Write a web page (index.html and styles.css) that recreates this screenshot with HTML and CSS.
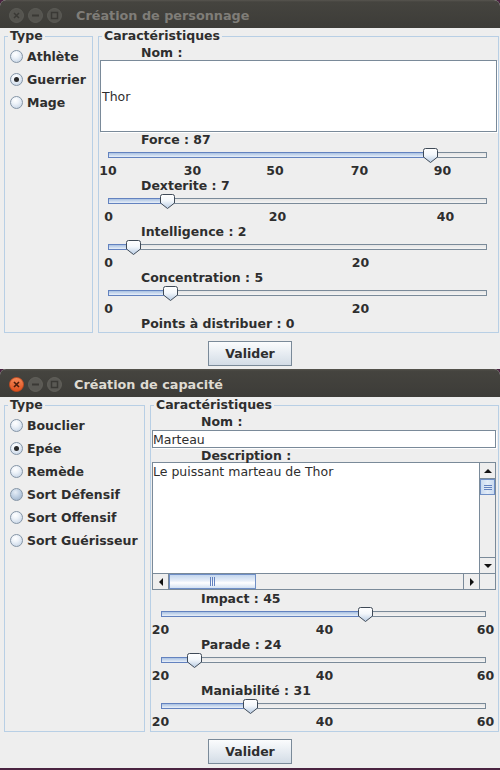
FILE: index.html
```html
<!DOCTYPE html>
<html lang="fr">
<head>
<meta charset="utf-8">
<title>Création de personnage</title>
<link rel="stylesheet" href="styles.css">
</head>
<body>
<svg class="defs" width="0" height="0" aria-hidden="true">
  <defs>
    <linearGradient id="thumbGrad" x1="0" y1="0" x2="0" y2="1">
      <stop offset="0" stop-color="#ffffff"/>
      <stop offset="0.45" stop-color="#f3f7fb"/>
      <stop offset="1" stop-color="#b7cbe3"/>
    </linearGradient>
    <linearGradient id="closeGrad" x1="0" y1="0" x2="0" y2="1">
      <stop offset="0" stop-color="#f48a5a"/>
      <stop offset="1" stop-color="#df4f1c"/>
    </linearGradient>
    <symbol id="thumb" viewBox="0 0 15 15">
      <path d="M0.5 2.5 Q0.5 0.5 2.5 0.5 H12.5 Q14.5 0.5 14.5 2.5 V9 L7.5 14.5 L0.5 9 Z" fill="url(#thumbGrad)" stroke="#3f4a57" stroke-width="1"/>
    </symbol>
  </defs>
</svg>

<section class="window w1 inactive">
  <header class="titlebar">
    <div class="wbtns">
      <svg class="wbtn" viewBox="0 0 15 15"><circle cx="7.5" cy="7.5" r="7" class="wb-bg"/><path d="M5 5 L10 10 M10 5 L5 10" class="wb-sym"/></svg>
      <svg class="wbtn" viewBox="0 0 15 15"><circle cx="7.5" cy="7.5" r="7" class="wb-bg"/><path d="M4 7.5 H11" class="wb-sym thick"/></svg>
      <svg class="wbtn" viewBox="0 0 15 15"><circle cx="7.5" cy="7.5" r="7" class="wb-bg"/><rect x="4.5" y="4.5" width="6" height="6" class="wb-sym"/></svg>
    </div>
    <span class="title">Création de personnage</span>
  </header>
  <div class="content">
    <div class="panels p1">
      <fieldset class="group">
        <legend>Type</legend>
        <div class="radios">
          <div class="radio"><span class="dot"></span>Athlète</div>
          <div class="radio checked"><span class="dot"></span>Guerrier</div>
          <div class="radio"><span class="dot"></span>Mage</div>
        </div>
      </fieldset>
      <fieldset class="group carac c1">
        <legend>Caractéristiques</legend>
        <div class="lbl">Nom :</div>
        <div class="field big">Thor</div>

        <div class="lbl">Force : 87</div>
        <div class="slider">
          <div class="track t1"><div class="fill" style="width:322px"></div></div>
          <svg class="thumb" style="left:324px"><use href="#thumb"/></svg>
        </div>
        <div class="ticks">
          <span style="left:9px">10</span><span style="left:93.5px">30</span><span style="left:176px">50</span><span style="left:260.5px">70</span><span style="left:343.5px">90</span>
        </div>

        <div class="lbl">Dexterite : 7</div>
        <div class="slider">
          <div class="track t1"><div class="fill" style="width:59px"></div></div>
          <svg class="thumb" style="left:61px"><use href="#thumb"/></svg>
        </div>
        <div class="ticks">
          <span style="left:9.5px">0</span><span style="left:178.5px">20</span><span style="left:346.5px">40</span>
        </div>

        <div class="lbl">Intelligence : 2</div>
        <div class="slider">
          <div class="track t1"><div class="fill" style="width:25px"></div></div>
          <svg class="thumb" style="left:27px"><use href="#thumb"/></svg>
        </div>
        <div class="ticks">
          <span style="left:9.5px">0</span><span style="left:261.5px">20</span>
        </div>

        <div class="lbl">Concentration : 5</div>
        <div class="slider">
          <div class="track t1"><div class="fill" style="width:63px"></div></div>
          <svg class="thumb" style="left:64px"><use href="#thumb"/></svg>
        </div>
        <div class="ticks">
          <span style="left:9.5px">0</span><span style="left:261.5px">20</span>
        </div>

        <div class="lbl">Points à distribuer : 0</div>
      </fieldset>
    </div>
    <div class="actions a1"><button class="btn" type="button">Valider</button></div>
  </div>
</section>

<section class="window w2 active">
  <header class="titlebar">
    <div class="wbtns">
      <svg class="wbtn" viewBox="0 0 15 15"><circle cx="7.5" cy="7.5" r="7" class="wb-close"/><path d="M5 5 L10 10 M10 5 L5 10" class="wb-sym close-sym"/></svg>
      <svg class="wbtn" viewBox="0 0 15 15"><circle cx="7.5" cy="7.5" r="7" class="wb-bg"/><path d="M4 7.5 H11" class="wb-sym thick"/></svg>
      <svg class="wbtn" viewBox="0 0 15 15"><circle cx="7.5" cy="7.5" r="7" class="wb-bg"/><rect x="4.5" y="4.5" width="6" height="6" class="wb-sym"/></svg>
    </div>
    <span class="title t2">Création de capacité</span>
  </header>
  <div class="content">
    <div class="panels p2">
      <fieldset class="group">
        <legend>Type</legend>
        <div class="radios">
          <div class="radio"><span class="dot"></span>Bouclier</div>
          <div class="radio checked"><span class="dot"></span>Epée</div>
          <div class="radio"><span class="dot"></span>Remède</div>
          <div class="radio hover"><span class="dot"></span>Sort Défensif</div>
          <div class="radio"><span class="dot"></span>Sort Offensif</div>
          <div class="radio"><span class="dot"></span>Sort Guérisseur</div>
        </div>
      </fieldset>
      <fieldset class="group carac c2">
        <legend>Caractéristiques</legend>
        <div class="lbl">Nom :</div>
        <div class="field small">Marteau</div>
        <div class="lbl">Description :</div>
        <div class="scroll">
          <div class="area">Le puissant marteau de Thor</div>
          <div class="vbar">
            <div class="sbtn"><span class="arr up"></span></div>
            <div class="vthumb"><span class="grip-h"></span><span class="grip-h"></span><span class="grip-h"></span></div>
            <div class="vtrack"></div>
            <div class="sbtn"><span class="arr down"></span></div>
          </div>
          <div class="hbar">
            <div class="sbtn"><span class="arr left"></span></div>
            <div class="hthumb"><span class="grip-v"></span><span class="grip-v"></span><span class="grip-v"></span></div>
            <div class="htrack"></div>
            <div class="sbtn"><span class="arr right"></span></div>
          </div>
          <div class="corner"></div>
        </div>

        <div class="lbl first">Impact : 45</div>
        <div class="slider">
          <div class="track t2"><div class="fill" style="width:204px"></div></div>
          <svg class="thumb" style="left:207px"><use href="#thumb"/></svg>
        </div>
        <div class="ticks">
          <span style="left:9.5px">20</span><span style="left:173.5px">40</span><span style="left:334.5px">60</span>
        </div>

        <div class="lbl">Parade : 24</div>
        <div class="slider">
          <div class="track t2"><div class="fill" style="width:33px"></div></div>
          <svg class="thumb" style="left:36px"><use href="#thumb"/></svg>
        </div>
        <div class="ticks">
          <span style="left:9.5px">20</span><span style="left:173.5px">40</span><span style="left:334.5px">60</span>
        </div>

        <div class="lbl">Maniabilité : 31</div>
        <div class="slider">
          <div class="track t2"><div class="fill" style="width:89px"></div></div>
          <svg class="thumb" style="left:92px"><use href="#thumb"/></svg>
        </div>
        <div class="ticks">
          <span style="left:9.5px">20</span><span style="left:173.5px">40</span><span style="left:334.5px">60</span>
        </div>
      </fieldset>
    </div>
    <div class="actions a2"><button class="btn" type="button">Valider</button></div>
  </div>
</section>
</body>
</html>
```

FILE: styles.css
```css
* { box-sizing: border-box; }
html, body { margin: 0; padding: 0; }
body {
  width: 500px;
  height: 770px;
  overflow: hidden;
  background: #4a2340;
  font-family: "DejaVu Sans", "Noto Sans", sans-serif;
  font-size: 12.5px;
  color: #2e2e2e;
}
.defs { position: absolute; width: 0; height: 0; overflow: hidden; }

.window {
  background: #eeeeee;
  border-radius: 6px 6px 0 0;
  overflow: hidden;
  display: flex;
  flex-direction: column;
}
.w1 { height: 369px; }
.w2 { height: 399px; }

.titlebar {
  height: 28px;
  flex: none;
  display: flex;
  align-items: center;
  padding: 2px 0 0 9px;
  background: linear-gradient(#57554f, #45443f 2px, #3d3c38);
}
.wbtns { display: flex; gap: 4px; }
.wbtn { width: 15px; height: 15px; display: block; }
.wb-bg { fill: #5a5954; stroke: #67665f; stroke-width: 0.8; }
.inactive .wb-bg { fill: #55544f; stroke: #605f5a; }
.wb-close { fill: url(#closeGrad); stroke: #c9471a; stroke-width: 0.8; }
.wb-sym { fill: none; stroke: #3a3935; stroke-width: 1.5; }
.wb-sym.thick { stroke-width: 2; }
.close-sym { stroke: #4a1d0c; stroke-width: 1.6; }
.title {
  margin-left: 14px;
  font-weight: bold;
  font-size: 12.8px;
}
.title.t2 { margin-left: 12px; }
.inactive .title { color: #7f7d78; }
.active .title { color: #dfdbd2; }

.content {
  flex: 1;
  display: flex;
  flex-direction: column;
  padding-top: 1px;
}
.panels {
  display: grid;
  gap: 5px;
  padding-left: 4px;
}
.p1 { grid-template-columns: 89px 401px; }
.p2 { grid-template-columns: 141px 349px; }

.group {
  margin: 0;
  padding: 0 0 2px;
  border: 1px solid #b8cfe5;
  min-width: 0;
}
.group legend {
  margin-left: 3px;
  padding: 0 2px;
  font-weight: bold;
  line-height: 14px;
}

.radios { padding-top: 2px; }
.radio {
  display: flex;
  align-items: center;
  gap: 4px;
  height: 23px;
  padding-left: 5px;
  font-weight: bold;
  white-space: nowrap;
}
.dot {
  position: relative;
  width: 13px;
  height: 13px;
  flex: none;
  border-radius: 50%;
  border: 1px solid #8595a6;
  background: radial-gradient(circle at 40% 30%, #ffffff 0, #eef3f9 35%, #bccde1 100%);
}
.radio.hover .dot {
  background: radial-gradient(circle at 40% 30%, #e6edf6 0, #c4d4e6 40%, #95aac4 100%);
}
.checked .dot::after {
  content: "";
  position: absolute;
  left: 3px;
  top: 3px;
  width: 5px;
  height: 5px;
  border-radius: 50%;
  background: #2a2a2a;
}

.carac { padding-top: 2px; }
.lbl {
  font-weight: bold;
  line-height: 14px;
  height: 14px;
  padding-top: 1px;
  white-space: nowrap;
}
.c1 .lbl { padding-left: 42px; }
.c2 .lbl { padding-left: 50px; }

.field {
  background: #ffffff;
  border: 1px solid #7a8a99;
  box-shadow: 1px 1px 0 #ffffff;
  display: flex;
  align-items: center;
}
.field.big {
  height: 72px;
  margin: 1px 1px 0 1px;
  padding-left: 1px;
}
.field.small {
  height: 18px;
  margin: 2px 2px 0 1px;
  padding-left: 0;
}

.scroll {
  height: 128px;
  margin: 0 2px 0 1px;
  border: 1px solid #7a8a99;
  display: grid;
  grid-template-columns: 1fr 16px;
  grid-template-rows: 1fr 16px;
  background: #eeeeee;
}
.area {
  background: #ffffff;
  line-height: 15px;
  padding-top: 1px;
  white-space: nowrap;
}
.vbar {
  display: flex;
  flex-direction: column;
  background: #eeeeee;
  border-left: 1px solid #7a8a99;
}
.hbar {
  display: flex;
  background: #eeeeee;
  border-top: 1px solid #7a8a99;
}
.corner { background: #eeeeee; border-top: 1px solid #7a8a99; border-left: 1px solid #7a8a99; }
.sbtn {
  flex: none;
  width: 15px;
  height: 15px;
  display: flex;
  align-items: center;
  justify-content: center;
  background: #eeeeee;
}
.vbar .sbtn { width: 15px; height: 16px; }
.vbar .sbtn:first-child { border-bottom: 1px solid #7a8a99; }
.vbar .sbtn:last-child { border-top: 1px solid #7a8a99; }
.hbar .sbtn { width: 16px; height: 15px; }
.hbar .sbtn:first-child { border-right: 1px solid #7a8a99; }
.hbar .sbtn:last-child { border-left: 1px solid #7a8a99; }
.arr { width: 0; height: 0; display: block; }
.arr.up { border-left: 4px solid transparent; border-right: 4px solid transparent; border-bottom: 4px solid #111; }
.arr.down { border-left: 4px solid transparent; border-right: 4px solid transparent; border-top: 4px solid #111; }
.arr.left { border-top: 4px solid transparent; border-bottom: 4px solid transparent; border-right: 4px solid #111; }
.arr.right { border-top: 4px solid transparent; border-bottom: 4px solid transparent; border-left: 4px solid #111; }
.vthumb {
  flex: none;
  height: 16px;
  border: 1px solid #6f8fc6;
  background: linear-gradient(90deg, #c9daf0, #e3ecf7 50%, #c9daf0);
  display: flex;
  flex-direction: column;
  align-items: center;
  justify-content: center;
  gap: 1px;
}
.grip-h { display: block; width: 8px; height: 1px; background: #6382bf; }
.vtrack { flex: 1; }
.hthumb {
  flex: none;
  width: 87px;
  border: 1px solid #6f8fc6;
  background: linear-gradient(#c3d6ee, #e8eff8 45%, #ffffff 60%, #d3e1f2);
  display: flex;
  align-items: center;
  justify-content: center;
  gap: 1px;
}
.grip-v { display: block; width: 1px; height: 9px; background: #6382bf; }
.htrack { flex: 1; }

.lbl.first { margin-top: 1px; }

.slider {
  position: relative;
  height: 17px;
}
.track {
  position: absolute;
  top: 6px;
  height: 6px;
  border: 1px solid #7a8a99;
  background: linear-gradient(#e4e4e4, #f4f4f4);
}
.track.t1 { left: 9px; width: 379px; }
.track.t2 { left: 10px; width: 325px; }
.fill {
  position: absolute;
  left: -1px;
  top: -1px;
  bottom: -1px;
  border: 1px solid #6382bf;
  background: linear-gradient(#a9c1e2, #e9f0f9);
}
.thumb {
  position: absolute;
  top: 2px;
  width: 15px;
  height: 15px;
  overflow: visible;
}

.ticks {
  position: relative;
  height: 15px;
  line-height: 15px;
  font-weight: bold;
}
.ticks span {
  position: absolute;
  top: 0;
  transform: translateX(-50%);
  white-space: nowrap;
}

.actions {
  display: flex;
  justify-content: center;
}
.a1 { margin-top: 8px; }
.a2 { margin-top: 7px; }
.btn {
  width: 84px;
  height: 25px;
  margin: 0;
  padding: 0;
  border: 1px solid #7a8a99;
  border-radius: 0;
  background: linear-gradient(#fbfcfd, #e9eef3 45%, #d3dce6);
  font-family: "DejaVu Sans", sans-serif;
  font-size: 12.5px;
  font-weight: bold;
  color: #2e2e2e;
}
```
